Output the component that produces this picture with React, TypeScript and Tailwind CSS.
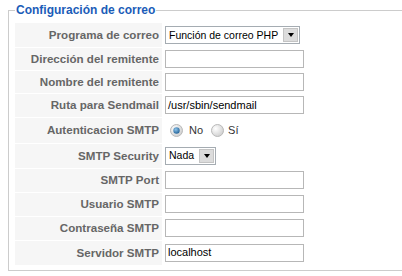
import React from "react";

const rows: { label: string; kind: "select" | "text" | "radio"; value?: string; w?: string; h: string }[] = [
  { label: "Programa de correo", kind: "select", value: "Función de correo PHP", w: "w-[135px]", h: "h-[24px]" },
  { label: "Dirección del remitente", kind: "text", h: "h-[23px]" },
  { label: "Nombre del remitente", kind: "text", h: "h-[23px]" },
  { label: "Ruta para Sendmail", kind: "text", value: "/usr/sbin/sendmail", h: "h-[24px]" },
  { label: "Autenticacion SMTP", kind: "radio", h: "h-[26px]" },
  { label: "SMTP Security", kind: "select", value: "Nada", w: "w-[51px]", h: "h-[25px]" },
  { label: "SMTP Port", kind: "text", h: "h-[24px]" },
  { label: "Usuario SMTP", kind: "text", h: "h-[24px]" },
  { label: "Contraseña SMTP", kind: "text", h: "h-[24px]" },
  { label: "Servidor SMTP", kind: "text", value: "localhost", h: "h-[25px]" },
];

const Radio = ({ checked }: { checked: boolean }) => (
  <svg width="13" height="13" viewBox="0 0 13 13">
    <defs>
      <radialGradient id={checked ? "rg1" : "rg0"} cx="0.35" cy="0.35" r="0.8">
        <stop offset="0" stopColor="#ffffff" />
        <stop offset="1" stopColor="#c8c8c8" />
      </radialGradient>
      <radialGradient id="dot" cx="0.4" cy="0.35" r="0.7">
        <stop offset="0" stopColor="#8ec4ea" />
        <stop offset="1" stopColor="#1f5f95" />
      </radialGradient>
    </defs>
    <circle cx="6.5" cy="6.5" r="6" fill={`url(#${checked ? "rg1" : "rg0"})`} stroke="#b9b9b9" />
    {checked && <circle cx="6.5" cy="6.5" r="3.2" fill="url(#dot)" />}
  </svg>
);

const Select = ({ value, w }: { value: string; w: string }) => (
  <div className={`${w} h-[18px] border border-[#a5acb2] bg-white flex items-center justify-between pl-[3px] pr-[1px]`}>
    <span className="text-[10.5px] text-black leading-none whitespace-nowrap">{value}</span>
    <div className="shrink-0 w-[15px] h-[14px] bg-[#dcdcdc] border border-[#c4c4c4] flex items-center justify-center">
      <div className="w-0 h-0 border-l-[3.5px] border-r-[3.5px] border-t-[4px] border-l-transparent border-r-transparent border-t-black" />
    </div>
  </div>
);

export default function App() {
  return (
    <div className="w-[402px] h-[276px] bg-white overflow-hidden font-['Liberation_Sans',Arial,sans-serif]">
      <fieldset className="ml-[8px] w-[400px] border border-[#cccccc] px-[6px] pb-[4px] pt-0 mt-[3px]">
        <legend className="px-[1px] text-[12px] font-bold text-[#1b5cb8] leading-[14px]">Configuración de correo</legend>
        <table className="border-collapse mt-[6px]">
          <tbody>
            {rows.map((r) => (
              <tr key={r.label} className={r.h}>
                <td className="w-[147px] bg-[#f6f6f6] border-b border-white text-right pr-[3px] text-[11.6px] font-bold text-[#666666] whitespace-nowrap">
                  {r.label}
                </td>
                <td className="pl-[3px]">
                  {r.kind === "select" && <Select value={r.value!} w={r.w!} />}
                  {r.kind === "text" && (
                    <div className="w-[139px] h-[18px] border border-[#b7b7b7] bg-white flex items-center pl-[2px] text-[11px] text-black">
                      {r.value}
                    </div>
                  )}
                  {r.kind === "radio" && (
                    <div className="flex items-center text-[11px] text-[#333] pl-[5px]">
                      <Radio checked />
                      <span className="ml-[6px]">No</span>
                      <span className="ml-[8px]"><Radio checked={false} /></span>
                      <span className="ml-[4px]">Sí</span>
                    </div>
                  )}
                </td>
              </tr>
            ))}
          </tbody>
        </table>
      </fieldset>
    </div>
  );
}
